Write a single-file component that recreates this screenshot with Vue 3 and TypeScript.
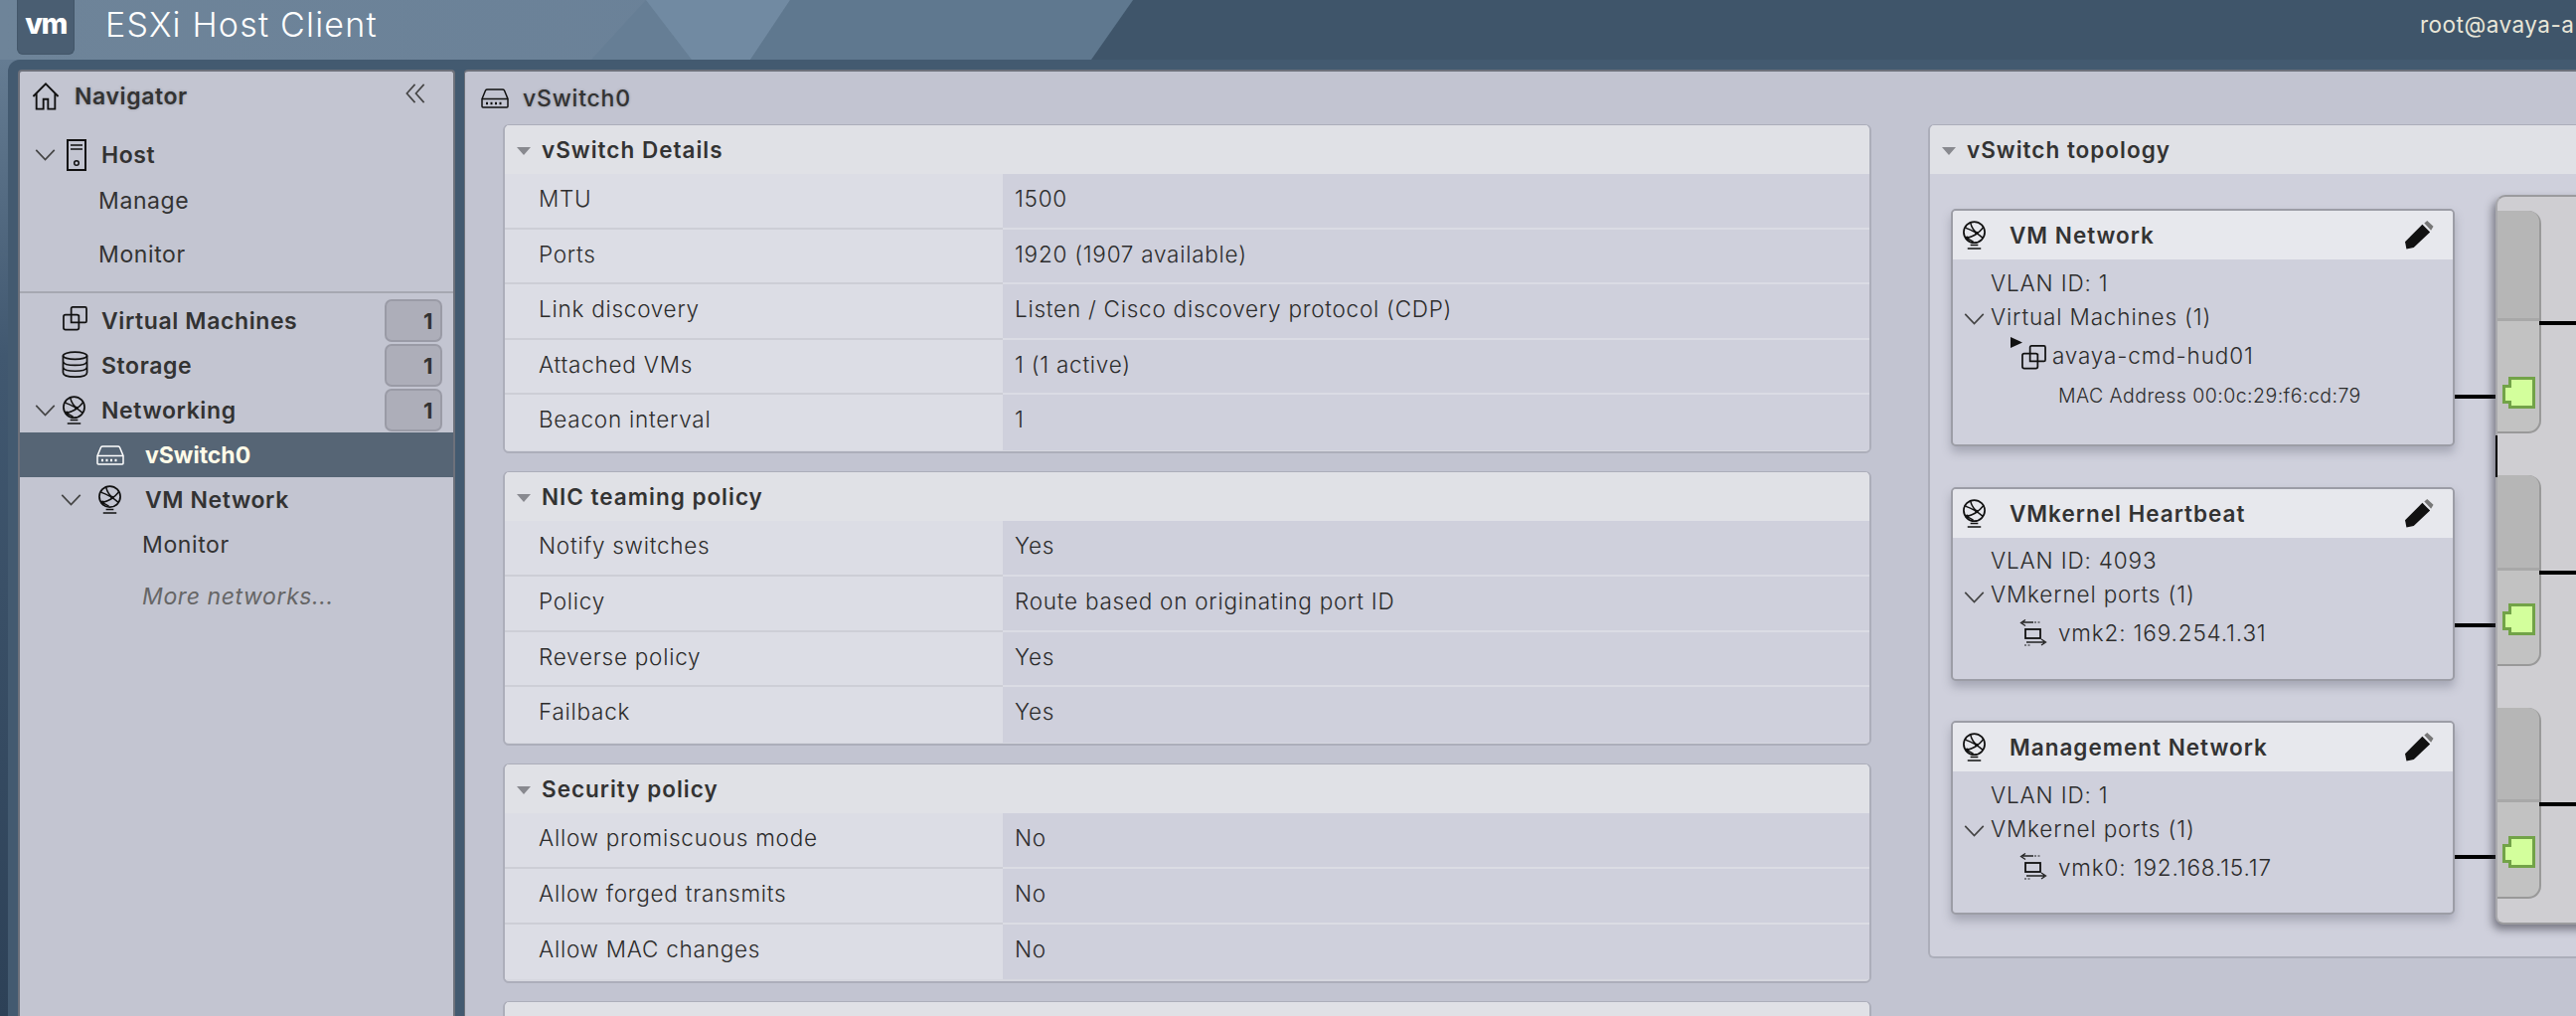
<script setup lang="ts">
interface Row { k: string; v: string }
interface Section { title: string; rows: Row[] }
const sections: Section[] = [
  { title: 'vSwitch Details', rows: [
    { k: 'MTU', v: '1500' },
    { k: 'Ports', v: '1920 (1907 available)' },
    { k: 'Link discovery', v: 'Listen / Cisco discovery protocol (CDP)' },
    { k: 'Attached VMs', v: '1 (1 active)' },
    { k: 'Beacon interval', v: '1' },
  ] },
  { title: 'NIC teaming policy', rows: [
    { k: 'Notify switches', v: 'Yes' },
    { k: 'Policy', v: 'Route based on originating port ID' },
    { k: 'Reverse policy', v: 'Yes' },
    { k: 'Failback', v: 'Yes' },
  ] },
  { title: 'Security policy', rows: [
    { k: 'Allow promiscuous mode', v: 'No' },
    { k: 'Allow forged transmits', v: 'No' },
    { k: 'Allow MAC changes', v: 'No' },
  ] },
]
const networks = [
  { name: 'VM Network', vlan: 'VLAN ID: 1', group: 'Virtual Machines (1)', item: 'avaya-cmd-hud01', vm: true, h: 239, wire: 185 },
  { name: 'VMkernel Heartbeat', vlan: 'VLAN ID: 4093', group: 'VMkernel ports (1)', item: 'vmk2: 169.254.1.31', vm: false, h: 195, wire: 135 },
  { name: 'Management Network', vlan: 'VLAN ID: 1', group: 'VMkernel ports (1)', item: 'vmk0: 192.168.15.17', vm: false, h: 195, wire: 133 },
]
const groups = [
  { top: 111, h: 224, gap: 56 },
  { top: 96, h: 192, gap: 33 },
  { top: 95, h: 192, gap: 34 },
]
</script>

<template>
  <div class="root">
    <header class="top">
      <svg class="deco" viewBox="0 0 2592 60" preserveAspectRatio="none" aria-hidden="true">
        <polygon points="595,60 650,0 696,60" fill="#667e95" />
        <polygon points="650,0 795,0 755,60 696,60" fill="#718aa2" />
        <polygon points="795,0 1140,0 1098,60 755,60" fill="#5f788f" />
        <polygon points="1140,0 2592,0 2592,60 1098,60" fill="#3f556a" />
      </svg>
      <div class="logo">vm</div>
      <div class="brand">ESXi Host Client</div>
      <div class="user">root@avaya-a</div>
    </header>

    <div class="main">
      <aside class="nav">
        <div class="nav-head">
          <svg class="i-home" viewBox="0 0 30 30"><path d="M1.5 15 15 1.5 28.5 15M5 12v16.5h7.5V18h5v10.5H25V12" fill="none" stroke="#111" stroke-width="2" /></svg>
          <span class="nav-title">Navigator</span>
          <svg class="i-collapse" viewBox="0 0 22 22"><path d="M10.5 1 1.500 11l9 10M20.500 1l-9 10 9 10" fill="none" stroke="#444" stroke-width="1.800" /></svg>
        </div>
        <div class="tree host">
          <svg class="chev" viewBox="0 0 22 13"><path d="M1 1l10 10.500L21 1" fill="none" stroke="#444" stroke-width="1.800" /></svg>
          <svg class="i-server" viewBox="0 0 20 32"><rect x="1" y="1" width="18" height="30" fill="none" stroke="#111" stroke-width="2" /><path d="M4 6h12M4 10h12" stroke="#111" stroke-width="1.500" /><circle cx="10" cy="24" r="2.300" fill="none" stroke="#111" stroke-width="1.500" /></svg>
          <span class="strong host-label">Host</span>
        </div>
        <div class="sub">Manage</div>
        <div class="sub">Monitor</div>
        <div class="divider"></div>

        <div class="tree">
          <svg class="slot-icon vm-ic" viewBox="0 0 26 26"><path d="M9 8V2.500Q9 1 10.500 1h13Q25 1 25 2.500v13q0 1.500-1.500 1.500H17M17 9v13.500q0 2-2 2H3q-2 0-2-2V11q0-2 2-2h12q2 0 2 2M9 9v8h8" fill="none" stroke="#111" stroke-width="1.800" /></svg>
          <span class="strong">Virtual Machines</span>
          <span class="badge">1</span>
        </div>
        <div class="tree">
          <svg class="slot-icon db-ic" viewBox="0 0 28 28"><ellipse cx="14" cy="5" rx="12.500" ry="3.800" fill="none" stroke="#111" stroke-width="1.800" /><path d="M1.500 5v17.500q0 4.500 12.500 4.500t12.500-4.500V5M1.500 11q1 4 12.500 4t12.500-4M1.500 17q1 4 12.500 4t12.500-4" fill="none" stroke="#111" stroke-width="1.800" /></svg>
          <span class="strong">Storage</span>
          <span class="badge">1</span>
        </div>
        <div class="tree net-row">
          <svg class="chev" viewBox="0 0 22 13"><path d="M1 1l10 10.500L21 1" fill="none" stroke="#444" stroke-width="1.800" /></svg>
          <svg class="i-globe" viewBox="0 0 26 30"><use href="#globe" /></svg>
          <span class="strong net-label">Networking</span>
          <span class="badge">1</span>
        </div>
        <div class="tree selected">
          <svg class="i-switch" viewBox="0 0 28 20"><path d="M1 10.500 4.500 2Q5 1 6.500 1h15q1.500 0 2 1L27 10.500V18q0 1-1 1H2q-1 0-1-1ZM1 10.500h26" fill="none" stroke="#fff" stroke-width="1.500" /><path d="M5 15h18" stroke="#fff" stroke-width="2.500" stroke-dasharray="2 2.500" /></svg>
          <span class="sel-label">vSwitch0</span>
        </div>
        <div class="tree vmnet">
          <svg class="chev" viewBox="0 0 22 13"><path d="M1 1l10 10.500L21 1" fill="none" stroke="#444" stroke-width="1.800" /></svg>
          <svg class="i-globe" viewBox="0 0 26 30"><use href="#globe" /></svg>
          <span class="strong vmnet-label">VM Network</span>
        </div>
        <div class="deep">Monitor</div>
        <div class="deep more">More networks...</div>
      </aside>

      <section class="content">
        <svg class="defs" width="0" height="0" aria-hidden="true">
          <symbol id="globe" viewBox="0 0 26 30">
            <circle cx="13" cy="12" r="11" fill="none" stroke="#111" stroke-width="1.800" />
            <path d="M3.500 7C9 10 14 10 22 18M5 18C11 17 17 14 22.500 7M9 2c1 4 3 8 7 11M5 18l7 4" fill="none" stroke="#111" stroke-width="1.500" />
            <circle cx="5.500" cy="18" r="2" fill="#111" /><circle cx="15.500" cy="13" r="1.800" fill="#111" />
            <path d="M9 25.500h8M6 29h14" stroke="#111" stroke-width="1.600" />
          </symbol>
        </svg>
        <div class="page-title">
          <svg class="i-switch" viewBox="0 0 28 20"><path d="M1 10.500 4.500 2Q5 1 6.500 1h15q1.500 0 2 1L27 10.500V18q0 1-1 1H2q-1 0-1-1ZM1 10.500h26" fill="none" stroke="#111" stroke-width="1.500" /><path d="M5 15h18" stroke="#111" stroke-width="2.500" stroke-dasharray="2 2.500" /></svg>
          <span>vSwitch0</span>
        </div>

        <div class="columns">
          <div class="left-col">
            <div v-for="s in sections" :key="s.title" class="card">
              <div class="card-head"><span class="tri"></span>{{ s.title }}</div>
              <div v-for="r in s.rows" :key="r.k" class="row">
                <div class="key">{{ r.k }}</div>
                <div class="val">{{ r.v }}</div>
              </div>
            </div>
            <div class="card"><div class="card-head"></div></div>
          </div>

          <div class="topo">
            <div class="card-head"><span class="tri"></span>vSwitch topology</div>
            <div class="canvas">
              <div class="nets">
                <div v-for="n in networks" :key="n.name" class="net" :style="{ height: n.h + 'px' }">
                  <div class="net-head">
                    <svg class="i-globe net-ic" viewBox="0 0 26 30"><use href="#globe" /></svg>
                    <span class="net-name">{{ n.name }}</span>
                    <svg class="i-pencil" viewBox="0 0 30 30"><path d="M18 4 26 12 9 28 1.500 29.500 0 22Z" fill="#111" /><path d="M20 2.500 23 0l6.500 6-2.500 4Z" fill="#777" /></svg>
                  </div>
                  <div class="net-line vlan">{{ n.vlan }}</div>
                  <div class="net-line grp">
                    <svg class="chev" viewBox="0 0 22 13"><path d="M1 1l10 10.500L21 1" fill="none" stroke="#444" stroke-width="1.800" /></svg>
                    <span>{{ n.group }}</span>
                  </div>
                  <div class="net-line item" :class="{ isvm: n.vm }">
                    <template v-if="n.vm">
                      <svg class="play" viewBox="0 0 12 11"><path d="M0 0 12 5.500 0 11Z" fill="#111" /></svg>
                      <svg class="vm-small" viewBox="0 0 26 26"><path d="M9 8V2.500Q9 1 10.500 1h13Q25 1 25 2.500v13q0 1.500-1.500 1.500H17M17 9v13.500q0 2-2 2H3q-2 0-2-2V11q0-2 2-2h12q2 0 2 2M9 9v8h8" fill="none" stroke="#111" stroke-width="1.800" /></svg>
                    </template>
                    <svg v-else class="i-vmk" viewBox="0 0 28 28"><path d="M14 3H3M6 .5 1.500 3.500 6 6.500M7 23h18M22 20l4.500 3-4.500 3" fill="none" stroke="#222" stroke-width="1.300" /><rect x="6" y="10" width="15" height="9" fill="none" stroke="#111" stroke-width="1.800" /><path d="M15 3h7M5 26h6" stroke="#222" stroke-width="1.200" stroke-dasharray="2 1.500" /></svg>
                    <span>{{ n.item }}</span>
                  </div>
                  <div v-if="n.vm" class="mac">MAC Address 00:0c:29:f6:cd:79</div>
                  <div class="wire" :style="{ top: n.wire + 'px' }"></div>
                </div>
              </div>

              <div class="switch-box">
                <div v-for="(g, i) in groups" :key="i" class="pg" :style="{ height: g.h + 'px' }">
                  <div class="pg-top" :style="{ height: g.top + 'px' }"></div>
                  <div class="pg-low" :style="{ paddingTop: g.gap + 'px' }">
                    <svg class="port" viewBox="0 0 33 32"><path d="M7.500 1.500H31.500V30.500H7.500V25.500H1.500V9.500H7.500Z" fill="#d3ff9c" stroke="#72a348" stroke-width="3" /></svg>
                  </div>
                  <div class="uplink" :style="{ top: g.top - 2 + 'px' }"></div>
                </div>
                <div class="trunk"></div>
              </div>
            </div>
          </div>
        </div>
      </section>
    </div>
  </div>
</template>

<style>
html, body { margin: 0; height: 100%; overflow: hidden; }
</style>

<style scoped>
.root {
  width: 2592px;
  height: 1022px;
  overflow: hidden;
  display: flex;
  flex-direction: column;
  background: linear-gradient(180deg, #6c8399 0%, #415870 35%, #2d4157 100%);
  font-family: Inter, "Liberation Sans", sans-serif;
  color: #333;
}
.top {
  position: relative;
  height: 60px;
  flex: none;
  display: flex;
  align-items: flex-start;
  background: linear-gradient(90deg, #6e8499, #6a8198 30%);
  overflow: hidden;
}
.deco { position: absolute; left: 0; top: 0; width: 2592px; height: 60px; }
.logo {
  position: relative;
  margin-left: 17px;
  width: 58px;
  height: 55px;
  box-sizing: border-box;
  background: #4a5e72;
  border: 1px solid #435669;
  border-top: 0;
  border-radius: 0 0 6px 6px;
  color: #fff;
  font-weight: 800;
  font-size: 29px;
  line-height: 48px;
  letter-spacing: -1.500px;
  text-align: center;
}
.brand {
  position: relative;
  margin-left: 31px;
  font-size: 34px;
  font-weight: 300;
  letter-spacing: 1.200px;
  line-height: 50px;
  color: #fff;
  white-space: nowrap;
}
.user {
  position: absolute;
  left: 2435px;
  top: 9px;
  font-size: 22.500px;
  letter-spacing: .5px;
  line-height: 32px;
  color: #e8e6d8;
  white-space: nowrap;
}
.main {
  flex: 1;
  min-height: 0;
  margin-left: 8px;
  padding: 10px 0 0 10px;
  display: flex;
  gap: 9px;
  background: #435a70;
  border-radius: 12px 0 0 0;
}
.nav {
  flex: none;
  width: 440px;
  box-sizing: border-box;
  background: #c3c5d1;
  border: 2px solid #6d717b;
  border-bottom: 0;
  border-radius: 4px 4px 0 0;
  letter-spacing: .6px;
}
.nav-head { height: 50px; margin-bottom: 15px; display: flex; align-items: center; padding-left: 12px; }
.i-home { width: 28px; height: 28px; }
.nav-title { margin-left: 15px; font-size: 23px; font-weight: 600; text-shadow: 0 0 3px rgba(0, 0, 0, .25); }
.i-collapse { width: 20px; height: 20px; margin-left: auto; margin-right: 28px; margin-bottom: 6px; }
.tree { display: flex; align-items: center; height: 45px; position: relative; padding-left: 82px; }
.host { height: 38px; padding-left: 15px; }
.chev { width: 21px; height: 12px; flex: none; }
.i-server { width: 20px; height: 32px; margin-left: 11px; }
.host-label { margin-left: 15px; }
.strong { font-size: 23px; font-weight: 600; color: #333; white-space: nowrap; }
.sub { height: 54px; line-height: 54px; padding-left: 79px; font-size: 23px; font-weight: 400; }
.divider { height: 2px; margin-top: 10px; margin-bottom: 5px; background: #a6a8b1; }
.slot-icon { position: absolute; }
.vm-ic { left: 43px; top: 8px; width: 25px; height: 25px; }
.db-ic { left: 42px; top: 8px; width: 27px; height: 27px; }
.badge {
  position: absolute;
  right: 11px;
  top: 1px;
  width: 58px;
  height: 43px;
  box-sizing: border-box;
  background: #adaeb9;
  border: 2px solid #9a9ba6;
  border-radius: 7px;
  padding-right: 7px;
  font-size: 22px;
  font-weight: 700;
  line-height: 40px;
  text-align: right;
}
.net-row { padding-left: 15px; }
.i-globe { width: 25px; height: 29px; flex: none; }
.net-row .i-globe { margin-left: 6px; }
.net-label { margin-left: 15px; }
.selected { background: #566575; padding-left: 77px; letter-spacing: 0; }
.i-switch { width: 28px; height: 20px; flex: none; }
.sel-label { margin-left: 21px; font-size: 23px; font-weight: 700; color: #fffbe8; }
.vmnet { padding-left: 41px; }
.vmnet .i-globe { margin-left: 16px; }
.vmnet-label { margin-left: 23px; }
.deep { padding-left: 123px; font-size: 23px; height: 46px; line-height: 46px; }
.more { margin-top: 3px; font-style: italic; color: #666; height: 52px; line-height: 52px; }
.content {
  flex: 1;
  min-width: 0;
  background: #c2c4d1;
  border-top: 2px solid #6d717b;
  border-left: 1px solid #6d717b;
  border-radius: 4px 0 0 0;
  overflow: hidden;
}
.defs { position: absolute; }
.page-title {
  height: 53px;
  display: flex;
  align-items: center;
  padding-left: 16px;
  gap: 14px;
  font-size: 23px;
  font-weight: 500;
  letter-spacing: .8px;
  text-shadow: 0 0 3px rgba(0, 0, 0, .25);
}
.columns { display: flex; padding-left: 38px; gap: 57px; width: 2600px; }
.left-col { flex: none; width: 1377px; display: flex; flex-direction: column; gap: 18px; }
.card, .topo {
  box-sizing: border-box;
  border: 2px solid #acaeba;
  border-top-width: 1px;
  border-radius: 6px;
  overflow: hidden;
  background: #d6d7df;
}
.card { padding-bottom: 1.500px; }
.card-head {
  height: 49px;
  display: flex;
  align-items: center;
  background: #e0e1e6;
  padding-left: 12px;
  font-size: 22.500px;
  font-weight: 600;
  letter-spacing: 1px;
  color: #333;
}
.tri {
  width: 0;
  height: 0;
  margin-right: 11px;
  margin-top: 2px;
  border-left: 7.500px solid transparent;
  border-right: 7.500px solid transparent;
  border-top: 8px solid #88898f;
}
.row { display: flex; height: 55.600px; font-size: 22.500px; font-weight: 350; letter-spacing: .75px; color: #2c2c2c; }
.key {
  flex: none;
  width: 501px;
  box-sizing: border-box;
  padding-left: 34px;
  line-height: 50px;
  background: #dcdde5;
  border-bottom: 2px solid #cdced6;
}
.val {
  flex: 1;
  padding-left: 12px;
  line-height: 50px;
  background: #cfd0dc;
  border-bottom: 2px solid #dbdce4;
}
.row:last-child .key, .row:last-child .val { border-bottom: 0; }
.topo { flex: 1; height: 839px; background: #cfd0dc; border-radius: 6px 0 0 6px; border-right: 0; }
.canvas { position: relative; padding: 35px 0 0 21px; height: 780px; box-sizing: border-box; }
.nets { display: flex; flex-direction: column; gap: 40.500px; width: 507px; }
.net {
  position: relative;
  box-sizing: border-box;
  background: #cfd0dc;
  border: 2px solid #9c9da6;
  border-radius: 5px;
  box-shadow: 0 6px 10px rgba(90, 92, 110, .35);
}
.net-head {
  height: 49px;
  display: flex;
  align-items: center;
  background: #e7e8ed;
  padding-left: 9px;
  border-radius: 3px 3px 0 0;
}
.net-ic { width: 25px; height: 29px; }
.net-name { margin-left: 23px; font-size: 22.500px; font-weight: 600; letter-spacing: 1px; }
.i-pencil { width: 29px; height: 29px; margin-left: auto; margin-right: 19px; }
.net-line { display: flex; align-items: center; font-size: 22.500px; font-weight: 350; letter-spacing: .85px; color: #2c2c2c; white-space: nowrap; }
.vlan { height: 34px; padding-left: 38px; margin-top: 6px; }
.grp { height: 34px; padding-left: 11px; gap: 6px; }
.grp .chev { margin-top: 6px; }
.item { height: 40px; padding-left: 67px; margin-top: 2px; }
.isvm { position: relative; padding-left: 69px; }
.play { position: absolute; left: 58px; top: 2px; width: 12px; height: 11px; }
.vm-small { width: 25px; height: 25px; margin-right: 6px; margin-top: 4px; flex: none; }
.i-vmk { width: 28px; height: 28px; margin-right: 11px; flex: none; }
.mac { padding-left: 106px; margin-top: 6px; font-size: 19.500px; font-weight: 350; letter-spacing: .45px; line-height: 30px; color: #2c2c2c; white-space: nowrap; }
.wire { position: absolute; left: 505px; width: 42px; height: 4px; background: #000; }
.switch-box {
  position: absolute;
  left: 569px;
  top: 21px;
  width: 200px;
  height: 734px;
  box-sizing: border-box;
  padding-top: 14px;
  display: flex;
  flex-direction: column;
  gap: 42px;
  background: #cfced2;
  border: 2px solid #9b9b9e;
  border-right: 0;
  border-left-color: #a9a9ad;
  border-radius: 10px 0 0 8px;
  box-shadow: -3px 5px 8px rgba(50, 50, 60, .55);
}
.pg {
  position: relative;
  width: 44px;
  flex: none;
  box-sizing: border-box;
  border: 2px solid #999;
  border-left: 0;
  border-radius: 0 13px 13px 0;
  background: #c2c2c2;
}
.pg-top { box-sizing: border-box; background: #b6b6b6; border-bottom: 3px solid #a8a8a8; border-radius: 0 11px 0 0; margin-top: -2px; }
.pg-low { padding-left: 5px; }
.port { display: block; width: 33px; height: 32px; }
.uplink { position: absolute; left: 42px; width: 200px; height: 4px; background: #000; }
.trunk { position: absolute; left: -2px; top: 240px; width: 2px; height: 42px; background: #000; }
</style>
